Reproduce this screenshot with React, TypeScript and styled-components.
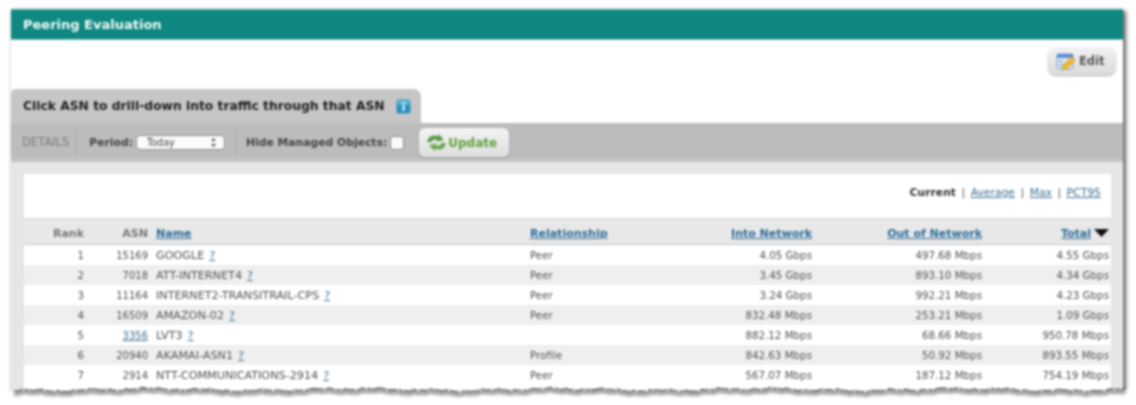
import React from "react";
import styled, { createGlobalStyle } from "styled-components";

const Global = createGlobalStyle`
  html, body { margin: 0; padding: 0; background: #fff; }
  body { width: 1136px; height: 405px; overflow: hidden; font-family: "DejaVu Sans", sans-serif; }
`;

const Page = styled.div`
  position: relative;
  width: 1136px;
  height: 405px;
  padding: 9px 13px 0 11px;
  box-sizing: border-box;
  overflow: hidden;
  background: #fff;
  filter: blur(0.85px);
`;

const Card = styled.div`
  height: 396px;
  background: #fff;
  box-shadow: 3px 2px 4px rgba(0, 0, 0, 0.6), -1px 0 3px rgba(0, 0, 0, 0.12);
`;

const Header = styled.div`
  height: 31px;
  background: #0e8880;
  border-top: 1px solid #5fb9b2;
  border-bottom: 1px solid #7cc8c2;
  box-sizing: border-box;
  display: flex;
  align-items: center;
  padding-left: 12px;
  color: #f2faf9;
  font-size: 13px;
  font-weight: 700;
`;

const EditRow = styled.div`
  height: 49px;
  box-sizing: border-box;
  display: flex;
  justify-content: flex-end;
  align-items: flex-start;
  padding: 7px 7px 0 0;
`;

const EditButton = styled.div`
  width: 68px;
  height: 28px;
  box-sizing: border-box;
  border-radius: 8px;
  background: linear-gradient(#f2f2f2, #dadada);
  box-shadow: 0 1px 2px rgba(0, 0, 0, 0.3);
  display: flex;
  align-items: center;
  gap: 3px;
  padding-left: 8px;
  color: #555;
  font-size: 11.5px;
  font-weight: 700;
`;

const Tab = styled.div`
  width: 410px;
  height: 34px;
  box-sizing: border-box;
  background: #c6c6c6;
  border-radius: 5px 8px 0 0;
  display: flex;
  align-items: center;
  gap: 11px;
  padding-left: 12px;
  color: #1d1d1d;
  font-size: 12.3px;
  font-weight: 700;
`;

const Toolbar = styled.div`
  height: 39px;
  background: linear-gradient(#bcbcbc 85%, #c8c8c8);
  display: flex;
  align-items: center;
  padding-left: 11px;
  font-size: 10.8px;
  font-weight: 700;
  color: #444;
`;

const Details = styled.span`
  font-weight: 400;
  color: #7a7a7a;
  font-size: 11.5px;
  padding-right: 7px;
  height: 27px;
  line-height: 27px;
  border-right: 1px solid #acacac;
`;

const Period = styled.span`
  margin-left: 12px;
`;

const Select = styled.span`
  width: 89px;
  height: 15px;
  margin-left: 3px;
  box-sizing: border-box;
  border-radius: 4px;
  background: #fbfbfb;
  border: 1px solid #8f8f8f;
  display: flex;
  align-items: center;
  justify-content: space-between;
  padding: 0 8px 0 10px;
  font-size: 9.6px;
  font-weight: 400;
  color: #444;
`;

const Sep = styled.span`
  width: 1px;
  height: 27px;
  background: #acacac;
  margin: 0 10px;
`;

const Check = styled.span`
  width: 14px;
  height: 14px;
  margin-left: 3px;
  box-sizing: border-box;
  border-radius: 3px;
  background: #fafafa;
  border: 1px solid #8a8a8a;
`;

const UpdateButton = styled.div`
  width: 90px;
  height: 29px;
  margin-left: 15px;
  box-sizing: border-box;
  border-radius: 6px;
  background: linear-gradient(#f3f3f3, #dedede);
  box-shadow: 0 1px 2px rgba(0, 0, 0, 0.2);
  display: flex;
  align-items: center;
  gap: 1px;
  padding-left: 7px;
  color: #5fa13c;
  font-size: 12px;
  font-weight: 700;
`;

const Body = styled.div`
  background: #e6e6e6;
  height: 240px;
  padding: 12px 12px 0 13px;
  box-sizing: border-box;
`;

const Panel = styled.div`
  background: #fff;
  height: 228px;
`;

const Views = styled.div`
  height: 44px;
  display: flex;
  justify-content: flex-end;
  align-items: center;
  gap: 5.5px;
  padding: 0 10px 8px 0;
  box-sizing: border-box;
  font-size: 10.8px;
  color: #555;
`;

const Current = styled.b`
  color: #333;
`;

const Link = styled.a`
  color: #3f6f93;
  text-decoration: underline;
`;

const HeadRow = styled.div`
  display: grid;
  grid-template-columns: 60px 64px 382px 141px 141px 170px 129px;
  height: 27px;
  padding-top: 3px;
  align-items: center;
  background: #e8e8e8;
  border-top: 1px solid #d8d8d8;
  border-bottom: 1px solid #c4c4c4;
  box-sizing: border-box;
  font-size: 11px;
  font-weight: 700;
  color: #777;
`;

const Row = styled.div<{ $alt: boolean }>`
  display: grid;
  grid-template-columns: 60px 64px 382px 141px 141px 170px 127px 2px;
  height: 20px;
  align-items: center;
  background: ${(p) => (p.$alt ? "#efefef" : "#fff")};
  font-size: 10.3px;
  color: #525252;
`;

const Right = styled.span`
  text-align: right;
  white-space: nowrap;
`;

const Asn = styled(Right)`
  font-size: 10px;
`;

const Left = styled.span<{ $pad?: number }>`
  padding-left: ${(p) => p.$pad ?? 0}px;
  white-space: nowrap;
`;

const NameCell = styled(Left)`
  font-size: 11.2px;
`;

const HeadLink = styled(Link)`
  color: #2b6a96;
`;

const Help = styled(Link)`
  margin-left: 5px;
`;

const SortArrow = styled.svg`
  margin-left: 3px;
  margin-right: 2px;
`;

const TotalHead = styled(Right)`
  display: flex;
  justify-content: flex-end;
  align-items: center;
`;

const Tear = styled.svg`
  position: absolute;
  left: 0;
  top: 378px;
`;

const TearShadow = styled.polyline`
  fill: none;
  stroke: #8a8a8a;
  stroke-width: 3.5;
  filter: blur(1.8px);
`;

const TearLine = styled.polyline`
  fill: none;
  stroke: #5a5a5a;
  stroke-width: 1.3;
  stroke-dasharray: 9 2 4 1 14 2;
`;

const rows = [
  ["1", "15169", "GOOGLE", "Peer", "4.05 Gbps", "497.68 Mbps", "4.55 Gbps"],
  ["2", "7018", "ATT-INTERNET4", "Peer", "3.45 Gbps", "893.10 Mbps", "4.34 Gbps"],
  ["3", "11164", "INTERNET2-TRANSITRAIL-CPS", "Peer", "3.24 Gbps", "992.21 Mbps", "4.23 Gbps"],
  ["4", "16509", "AMAZON-02", "Peer", "832.48 Mbps", "253.21 Mbps", "1.09 Gbps"],
  ["5", "3356", "LVT3", "", "882.12 Mbps", "68.66 Mbps", "950.78 Mbps"],
  ["6", "20940", "AKAMAI-ASN1", "Profile", "842.63 Mbps", "50.92 Mbps", "893.55 Mbps"],
  ["7", "2914", "NTT-COMMUNICATIONS-2914", "Peer", "567.07 Mbps", "187.12 Mbps", "754.19 Mbps"],
];

const edgePts = (() => {
  const pts: string[] = [];
  for (let x = 14; x <= 1128; x += 4) {
    const y =
      12 +
      Math.sin(x * 0.031) * 0.9 +
      Math.sin(x * 0.11 + 1) * 0.8 +
      Math.sin(x * 0.37 + 2) * 0.6 +
      Math.sin(x * 0.83) * 0.5;
    pts.push(`${x},${y.toFixed(1)}`);
  }
  return pts.join(" ");
})();

const InfoIcon = () => (
  <svg width="15" height="15" viewBox="0 0 14 14">
    <rect x="0.5" y="0.5" width="13" height="13" rx="2" fill="#2a8fbe" />
    <rect x="1" y="1" width="12" height="4.5" rx="1.5" fill="#58b4d8" />
    <rect x="6" y="6" width="2.2" height="5" fill="#d8f0f8" />
    <rect x="6" y="3" width="2.2" height="2" fill="#d8f0f8" />
  </svg>
);

const EditIcon = () => (
  <svg width="20" height="20" viewBox="0 0 20 20">
    <rect x="1" y="3" width="16" height="15" rx="1.5" fill="#dfe9f6" stroke="#7f9fd0" />
    <rect x="1" y="3" width="16" height="4" fill="#5f8fd4" />
    <rect x="3" y="9" width="4" height="2.5" fill="#a9c0e2" />
    <rect x="3" y="13" width="4" height="2.5" fill="#a9c0e2" />
    <path d="M6 19 L7 14 L15 6 L19.5 9 L12 17 Z" fill="#eeb93a" stroke="#d29a22" strokeWidth="0.6" />
  </svg>
);

const UpdateIcon = () => (
  <svg width="21" height="19" viewBox="0 0 20 18">
    <path d="M1 8 C2 3 7 1 11 3 L12 1 L17 6.5 L10 8 L10.5 6.5 C8 5.5 6 6 5 9 Z" fill="#5b9a4a" />
    <path d="M19 10 C18 15 13 17 9 15 L8 17 L3 11.5 L10 10 L9.5 11.5 C12 12.5 14 12 15 9 Z" fill="#6aa955" />
  </svg>
);

const SelectArrows = () => (
  <svg width="5" height="9" viewBox="0 0 5 9">
    <path d="M2.5 0 L5 3 H0 Z M2.5 9 L0 6 H5 Z" fill="#555" />
  </svg>
);

export default function App() {
  return (
    <>
      <Global />
      <Page>
        <Card>
          <Header>Peering Evaluation</Header>
          <EditRow>
            <EditButton>
              <EditIcon />
              Edit
            </EditButton>
          </EditRow>
          <Tab>
            Click ASN to drill-down into traffic through that ASN
            <InfoIcon />
          </Tab>
          <Toolbar>
            <Details>DETAILS</Details>
            <Period>Period:</Period>
            <Select>
              Today
              <SelectArrows />
            </Select>
            <Sep />
            Hide Managed Objects:
            <Check />
            <UpdateButton>
              <UpdateIcon />
              Update
            </UpdateButton>
          </Toolbar>
          <Body>
            <Panel>
              <Views>
                <Current>Current</Current> | <Link>Average</Link> | <Link>Max</Link> | <Link>PCT95</Link>
              </Views>
              <HeadRow>
                <Right>Rank</Right>
                <Right>ASN</Right>
                <Left $pad={8}>
                  <HeadLink>Name</HeadLink>
                </Left>
                <Left>
                  <HeadLink>Relationship</HeadLink>
                </Left>
                <Right>
                  <HeadLink>Into Network</HeadLink>
                </Right>
                <Right>
                  <HeadLink>Out of Network</HeadLink>
                </Right>
                <TotalHead>
                  <HeadLink>Total</HeadLink>
                  <SortArrow width="15" height="8" viewBox="0 0 15 8">
                    <path d="M0 0 H15 L7.5 8 Z" fill="#111" />
                  </SortArrow>
                </TotalHead>
              </HeadRow>
              {rows.map((r, i) => (
                <Row key={r[0]} $alt={i % 2 === 1}>
                  <Right>{r[0]}</Right>
                  <Asn>{r[0] === "5" ? <Link>{r[1]}</Link> : r[1]}</Asn>
                  <NameCell $pad={8}>
                    {r[2]}
                    <Help>?</Help>
                  </NameCell>
                  <Left>{r[3]}</Left>
                  <Right>{r[4]}</Right>
                  <Right>{r[5]}</Right>
                  <Right>{r[6]}</Right>
                </Row>
              ))}
            </Panel>
          </Body>
        </Card>
        <Tear width="1136" height="27" viewBox="0 0 1136 27">
          <polygon points={`6,27 6,14 ${edgePts} 1136,14 1136,27`} fill="#fff" />
          <TearShadow points={edgePts} transform="translate(0 2.5)" />
          <TearLine points={edgePts} />
        </Tear>
      </Page>
    </>
  );
}
